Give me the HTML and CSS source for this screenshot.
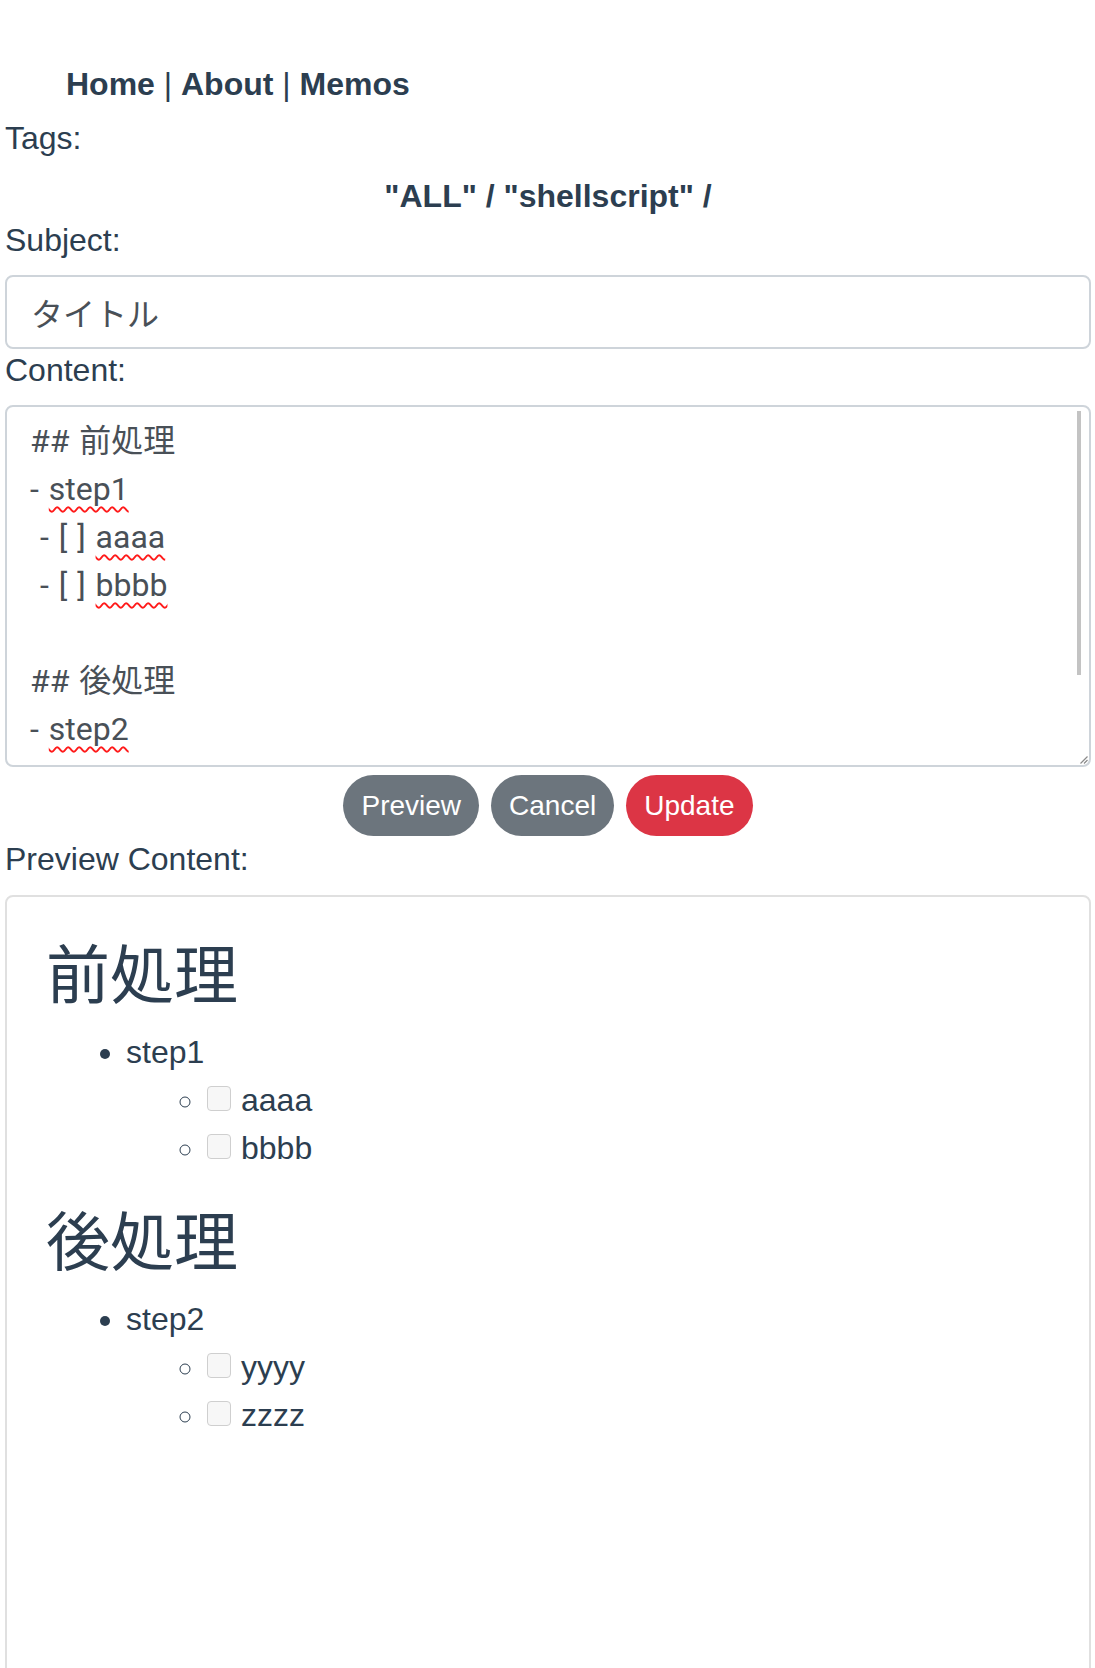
FILE: index.html
```html
<!DOCTYPE html>
<html lang="ja">
<head>
<meta charset="utf-8">
<title>Memo Edit</title>
<link rel="stylesheet" href="styles.css">
</head>
<body>
<div id="app">
  <nav class="nav">
    <a class="nav-link" href="#">Home</a> | <a class="nav-link" href="#">About</a> | <a class="nav-link" href="#">Memos</a>
  </nav>
  <main class="memo-edit">
    <div class="field-label">Tags:</div>
    <div class="tag-list"><a class="tag" href="#">"ALL"</a> / <a class="tag" href="#">"shellscript"</a> /</div>

    <label class="field-label field-label-input" for="subject">Subject:</label>
    <input id="subject" class="form-control" type="text" value="タイトル">

    <label class="field-label field-label-input">Content:</label>
    <div class="editor" role="textbox" aria-multiline="true">
      <div class="editor-text">
        <div class="line">## 前処理</div>
        <div class="line">- <span class="typo">step1</span></div>
        <div class="line"> - [ ] <span class="typo">aaaa</span></div>
        <div class="line"> - [ ] <span class="typo">bbbb</span></div>
        <div class="line"></div>
        <div class="line">## 後処理</div>
        <div class="line">- <span class="typo">step2</span></div>
      </div>
      <div class="scroll-thumb"></div>
      <svg class="resize-grip" width="9" height="9" viewBox="0 0 9 9"><path d="M8.5 1.5 L1.5 8.5 M8.5 5 L5 8.5" stroke="#8a8a8a" stroke-width="1.2" fill="none"/></svg>
    </div>

    <div class="actions">
      <button class="btn btn-secondary" type="button">Preview</button>
      <button class="btn btn-secondary" type="button">Cancel</button>
      <button class="btn btn-danger" type="button">Update</button>
    </div>

    <div class="field-label field-label-preview">Preview Content:</div>
    <div class="preview">
      <h1 class="preview-h1">前処理</h1>
      <ul class="preview-list">
        <li>step1
          <ul class="task-list">
            <li><span class="checkbox"></span>aaaa</li>
            <li><span class="checkbox"></span>bbbb</li>
          </ul>
        </li>
      </ul>
      <h1 class="preview-h1">後処理</h1>
      <ul class="preview-list">
        <li>step2
          <ul class="task-list">
            <li><span class="checkbox"></span>yyyy</li>
            <li><span class="checkbox"></span>zzzz</li>
          </ul>
        </li>
      </ul>
    </div>
  </main>
</div>
</body>
</html>
```

FILE: styles.css
```css
html, body {
  margin: 0;
  padding: 0;
  overflow: hidden;
  background: #ffffff;
}

#app {
  font-family: "Liberation Sans", Arial, "Noto Sans CJK JP", sans-serif;
  font-size: 32px;
  color: #2c3e50;
}

.nav {
  padding: 66px 0 18px 66px;
  line-height: 36px;
}

.nav-link {
  font-weight: bold;
  color: #2c3e50;
  text-decoration: none;
}

.memo-edit {
  padding: 0 4px 0 5px;
}

.field-label {
  display: block;
  line-height: 36px;
  margin-bottom: 20px;
}

.field-label-input {
  padding-top: 3px;
  margin-bottom: 17px;
}

.field-label-preview {
  margin-top: 5px;
  margin-bottom: 18px;
}

.tag-list {
  text-align: center;
  font-weight: bold;
  line-height: 40px;
  margin-bottom: 3px;
}

.tag {
  color: #2c3e50;
  text-decoration: none;
}

.form-control {
  display: block;
  box-sizing: border-box;
  width: 100%;
  height: 74px;
  margin: 0;
  padding: 0 24px;
  border: 2px solid #ced4da;
  border-radius: 8px;
  font-family: "Noto Sans CJK JP", sans-serif;
  font-size: 32px;
  color: #495057;
  background: #fff;
  outline: none;
}

.editor {
  position: relative;
  box-sizing: border-box;
  height: 362px;
  border: 2px solid #ced4da;
  border-radius: 8px;
  padding: 10px 24px 0 23px;
  overflow: hidden;
  background: #fff;
}

.editor-text {
  font-family: Roboto, "Noto Sans CJK JP", sans-serif;
  font-size: 32px;
  line-height: 48px;
  color: #495057;
  word-spacing: 2px;
}

.line {
  height: 48px;
  white-space: pre;
}

.typo {
  text-decoration: underline wavy #ff1a1a;
  text-decoration-thickness: 1.5px;
  text-underline-offset: 6px;
}

.scroll-thumb {
  position: absolute;
  top: 4px;
  right: 8px;
  width: 4px;
  height: 264px;
  background: #c3c3c3;
}

.resize-grip {
  position: absolute;
  right: 1px;
  bottom: 1px;
}

.actions {
  display: flex;
  justify-content: center;
  gap: 12px;
  margin-top: 8px;
}

.btn {
  font-family: "Liberation Sans", Arial, sans-serif;
  font-size: 28px;
  line-height: 43px;
  padding: 9px 18px;
  border: none;
  border-radius: 31px;
  color: #fff;
  cursor: pointer;
}

.btn-secondary {
  background: #6c757d;
}

.btn-danger {
  background: #dc3545;
}

.preview {
  box-sizing: border-box;
  height: 800px;
  border: 2px solid #e0e0e0;
  border-radius: 8px;
  padding: 27px 39px;
}

.preview-h1 {
  font-family: "Noto Sans CJK JP", sans-serif;
  font-size: 64px;
  font-weight: 400;
  line-height: 93px;
  margin: 0 0 11px;
}

.preview-list {
  margin: 0 0 19px;
  padding-left: 80px;
  line-height: 48px;
  list-style: disc;
}

.task-list {
  margin: 0;
  padding-left: 80px;
  list-style: circle;
}

.checkbox {
  display: inline-block;
  box-sizing: border-box;
  width: 24px;
  height: 25px;
  margin: 0 10px 0 1px;
  border: 1px solid #cfcfcf;
  border-radius: 4px;
  background: #f7f7f7;
}
```
